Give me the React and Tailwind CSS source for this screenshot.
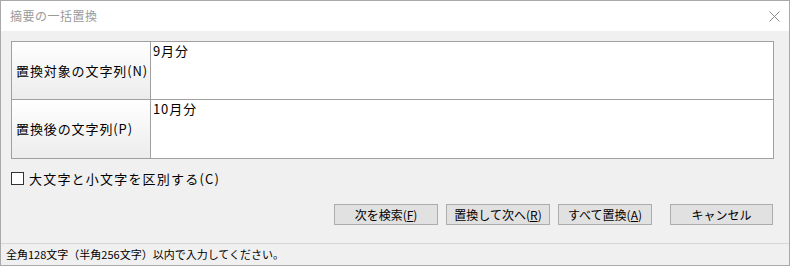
export default function App() {
  const font = { fontFamily: '"MS UI Gothic", "Noto Sans CJK JP", sans-serif' };

  const buttons = [
    { label: "次を検索(", key: "F", w: "w-[104px]" },
    { label: "置換して次へ(", key: "R", w: "w-[104px]" },
    { label: "すべて置換(", key: "A", w: "w-[94px]" },
  ];

  return (
    <div
      className="w-[790px] h-[266px] bg-[#f0f0f0] border border-[#a9a9a9] flex flex-col text-black overflow-hidden"
      style={font}
    >
      {/* Title bar */}
      <div className="h-[30px] bg-white flex items-center justify-between pl-[9px] pr-[9px] shrink-0">
        <span className="text-[12px] text-[#9a9a9a] tracking-[0.5px]">摘要の一括置換</span>
        <svg width="11" height="11" viewBox="0 0 11 11">
          <path d="M0.5 0.5 L10.5 10.5 M10.5 0.5 L0.5 10.5" stroke="#8a8a8a" strokeWidth="1" />
        </svg>
      </div>

      {/* Body */}
      <div className="flex-1 flex flex-col pl-[10px] pr-[15px] pt-[10px]">
        <div className="w-[763px] border border-[#a0a0a0] grid grid-cols-[139px_1fr] grid-rows-[58px_58px] bg-white">
          <div className="border-r border-b border-[#a0a0a0] bg-gradient-to-b from-white to-[#ececec] flex items-center pl-[4px] text-[13px] tracking-[0.9px]">
            置換対象の文字列(N)
          </div>
          <div className="border-b border-[#a0a0a0] bg-white pl-[2px] pt-[1px] text-[13px] tracking-[0.9px] leading-[16px]">
            9月分
          </div>
          <div className="border-r border-[#a0a0a0] bg-gradient-to-b from-white to-[#ececec] flex items-center pl-[4px] text-[13px] tracking-[0.9px]">
            置換後の文字列(P)
          </div>
          <div className="bg-white pl-[2px] pt-[1px] text-[13px] tracking-[0.9px] leading-[16px]">
            10月分
          </div>
        </div>

        {/* Checkbox */}
        <label className="mt-[12px] flex items-center gap-[5px] h-[15px] text-[13px] tracking-[1.2px]">
          <span className="w-[13px] h-[13px] border border-[#333] bg-white shrink-0" />
          大文字と小文字を区別する(C)
        </label>

        {/* Buttons */}
        <div className="mt-[18px] flex justify-end">
          <div className="flex gap-[8px]">
            {buttons.map((b) => (
              <button
                key={b.label}
                className={`${b.w} h-[21px] border border-[#adadad] bg-[#e1e1e1] text-[12px] leading-none flex items-center justify-center`}
              >
                {b.label}
                <span className="underline">{b.key}</span>)
              </button>
            ))}
          </div>
          <button className="ml-[18px] mr-[1px] w-[103px] h-[21px] border border-[#adadad] bg-[#e1e1e1] text-[12px] leading-none flex items-center justify-center">
            キャンセル
          </button>
        </div>
      </div>

      {/* Status bar */}
      <div className="h-[22px] border-t border-[#d7d7d7] flex items-center pl-[5px] text-[11px] shrink-0">
        全角128文字（半角256文字）以内で入力してください。
      </div>
    </div>
  );
}
